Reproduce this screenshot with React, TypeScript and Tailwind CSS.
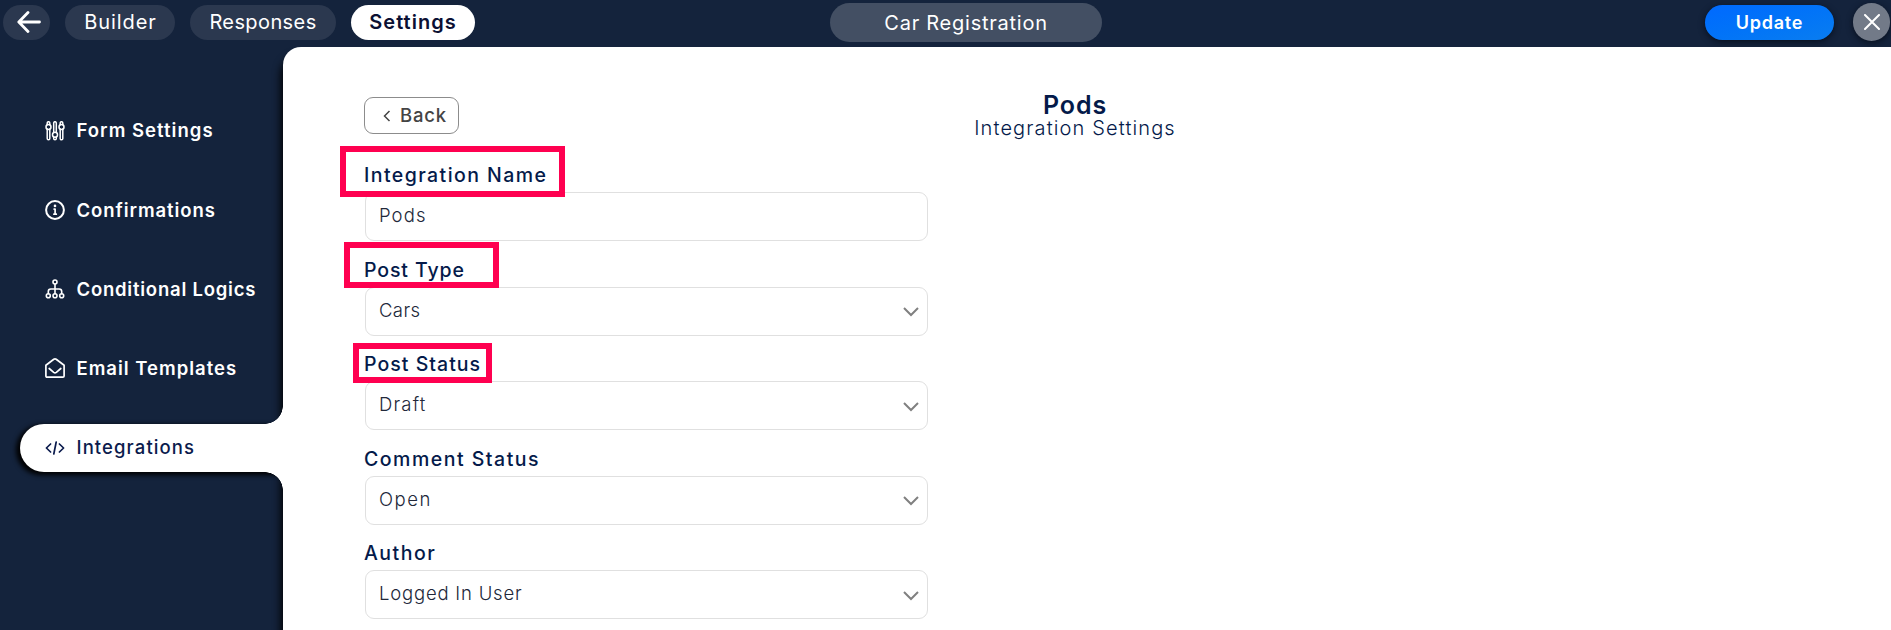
import React from "react";

const svgProps = {
  viewBox: "0 0 20 20",
  fill: "none",
  stroke: "currentColor",
  strokeLinecap: "round" as const,
  strokeLinejoin: "round" as const,
  className: "h-5 w-5 shrink-0",
};

function SlidersIcon() {
  return (
    <svg {...svgProps} strokeWidth={1.5}>
      <path d="M2.2 3.8V2a1.3 1.3 0 0 1 2.6 0v1.8M2.2 8v9.5a1.3 1.3 0 0 0 2.6 0V8M8.7 11.5V2a1.3 1.3 0 0 1 2.6 0v9.5M8.7 16v1.5a1.3 1.3 0 0 0 2.6 0V16M15.2 3.8V2a1.3 1.3 0 0 1 2.6 0v1.8M15.2 8v9.5a1.3 1.3 0 0 0 2.6 0V8" />
      <circle cx="3.5" cy="6" r="2.5" />
      <circle cx="10" cy="13.8" r="2.5" />
      <circle cx="16.5" cy="6" r="2.5" />
    </svg>
  );
}

function InfoIcon() {
  return (
    <svg {...svgProps} strokeWidth={2}>
      <circle cx="10" cy="10" r="8.9" />
      <path d="M9.1 9.1h1v5M8.9 14.2h2.4" strokeWidth={1.7} />
      <circle cx="10" cy="5.9" r="1.3" fill="currentColor" stroke="none" />
    </svg>
  );
}

function TreeIcon() {
  return (
    <svg {...svgProps} strokeWidth={1.6}>
      <circle cx="10" cy="3" r="2" />
      <circle cx="3.3" cy="16.8" r="2" />
      <circle cx="10" cy="16.8" r="2" />
      <circle cx="16.7" cy="16.8" r="2" />
      <path d="M10 5v9.8M3.3 14.8v-2.3q0-2.5 2.5-2.5h8.4q2.5 0 2.5 2.5v2.3" />
    </svg>
  );
}

function MailIcon() {
  return (
    <svg {...svgProps} strokeWidth={1.7}>
      <path d="M.9 7.3 8.8 1.3q1.2-.8 2.4 0l7.9 6v10.6q0 1.2-1.2 1.2H2.1q-1.2 0-1.2-1.2Z" />
      <path d="m4.2 10.5 4.5 3.8q1.3 1 2.6 0l4.5-3.8" />
    </svg>
  );
}

function CodeIcon() {
  return (
    <svg {...svgProps} strokeWidth={1.7}>
      <path d="M5.6 6 1.4 10l4.2 4M14.4 6l4.2 4-4.2 4M11.2 4 8.8 16" />
    </svg>
  );
}

const nav = [
  { label: "Form Settings", icon: <SlidersIcon />, tracking: "tracking-[1.03px]" },
  { label: "Confirmations", icon: <InfoIcon />, tracking: "tracking-[0.93px]" },
  { label: "Conditional Logics", icon: <TreeIcon />, tracking: "tracking-[0.77px]" },
  { label: "Email Templates", icon: <MailIcon />, tracking: "tracking-[1px]" },
];

const fields = [
  { label: "Integration Name", lt: "tracking-[1.43px]", value: "Pods", vt: "tracking-[1.1px]", mark: "-left-[24px] -top-[19px] h-[51px] w-[225px]" },
  { label: "Post Type", lt: "tracking-[0.9px]", value: "Cars", vt: "tracking-[0.4px]", select: true, mark: "-left-[20px] -top-[18px] h-[46px] w-[155px]" },
  { label: "Post Status", lt: "tracking-[1.03px]", value: "Draft", vt: "tracking-[1.2px]", select: true, mark: "-left-[11px] -top-[11px] h-[40px] w-[139px]" },
  { label: "Comment Status", lt: "tracking-[1.5px]", value: "Open", vt: "tracking-[1.5px]", select: true },
  { label: "Author", lt: "tracking-[1.5px]", value: "Logged In User", vt: "tracking-[0.8px]", select: true },
];

function Header() {
  return (
    <header className="flex h-[47px] shrink-0 items-start bg-[#14233c] pl-[3px] pr-px text-[20px] leading-none text-white">
      <button className="mt-[5px] flex h-[35px] w-[47px] items-center justify-center rounded-full bg-[#2b384f]">
        <svg viewBox="0 0 24 24" fill="none" stroke="currentColor" strokeWidth={2.8} strokeLinecap="round" strokeLinejoin="round" className="-mt-px ml-[5px] h-6 w-6">
          <path d="M22.5 12H2M11 2.5 1.8 12l9.2 9.5" />
        </svg>
      </button>
      <button className="ml-[15px] mt-[5px] h-[35px] w-[110px] rounded-full bg-[#2b384f] pb-px pl-px tracking-[0.9px]">Builder</button>
      <button className="ml-[15px] mt-[5px] h-[35px] w-[146px] rounded-full bg-[#2b384f] pb-px tracking-[0.4px]">Responses</button>
      <button className="ml-[15px] mt-[5px] h-[35px] w-[124px] rounded-full bg-white pb-px font-semibold tracking-[1px] text-[#0b1033]">Settings</button>
      <div className="ml-[355px] mt-[3px] flex h-[39px] w-[272px] items-center justify-center rounded-full bg-[#434f63] tracking-[0.75px]">Car Registration</div>
      <button className="ml-auto mt-[5px] h-[35px] w-[129px] rounded-full bg-linear-to-br from-[#0069ff] to-[#0a7df0] text-[18px] font-semibold tracking-[0.75px] shadow-[0_2px_6px_#08101f]">Update</button>
      <button className="ml-[19px] mt-[3px] flex h-[38px] w-[37px] items-center justify-center rounded-full bg-[#727a88] shadow-[0_2px_6px_#08101f]">
        <svg viewBox="0 0 16 16" stroke="currentColor" strokeWidth={2} strokeLinecap="round" className="h-4 w-4">
          <path d="m1 1 14 14m0-14-14 14" />
        </svg>
      </button>
    </header>
  );
}

function Sidebar() {
  return (
    <nav className="w-[283px] shrink-0 pt-[44px] text-[18.5px] text-white">
      {nav.map((item) => (
        <div key={item.label} className="flex h-[79.25px] items-center gap-3 pl-[44.5px]">
          {item.icon}
          <span className={`whitespace-nowrap font-semibold leading-none ${item.tracking}`}>{item.label}</span>
        </div>
      ))}
      <div className="relative z-20 ml-5 mt-[16px] flex h-12 items-center gap-3 rounded-l-full bg-white pl-[24.5px] text-[#0b1b4d] shadow-[-3px_2px_5px_1px_#000] [clip-path:inset(-20px_0_-20px_-20px)]">
        <CodeIcon />
        <span className="pb-px font-medium leading-none tracking-[1.1px]">Integrations</span>
        <i className="absolute -top-[18px] right-0 h-[18px] w-[18px] bg-[radial-gradient(circle_at_0_0,transparent_17.5px,#fff_18px)]" />
        <i className="absolute -bottom-[18px] right-0 h-[18px] w-[18px] bg-[radial-gradient(circle_at_0_100%,transparent_17.5px,#fff_18px)]" />
      </div>
    </nav>
  );
}

export default function App() {
  return (
    <div className="flex h-[630px] w-full flex-col overflow-hidden bg-[#14233c] font-['Inter',sans-serif]">
      <Header />
      <div className="flex min-h-0 flex-1 overflow-hidden">
        <Sidebar />
        <main className="relative z-10 flex-1 rounded-tl-[18px] bg-white pl-[81px] pr-[105px] pt-[47px] shadow-[-1px_10px_9px_1px_#000]">
          <div className="grid h-[71px] grid-cols-[1fr_auto_1fr] items-start">
            <button className="mt-[3px] flex h-[37px] w-[95px] items-center rounded-[9px] border border-[#8c8c8c] pl-[18px] text-[18.5px] font-medium leading-none tracking-[0.8px] text-[#444]">
              <svg viewBox="0 0 8 12" fill="none" stroke="currentColor" strokeWidth={1.5} className="mr-[9px] h-3 w-[8px]">
                <path d="M6.5 1 1.5 6l5 5" />
              </svg>
              Back
            </button>
            <div className="text-center text-[#041a4a]">
              <h1 className="text-[25px] font-semibold leading-[23px] tracking-[0.9px]">Pods</h1>
              <p className="text-[20px] font-light leading-[22px] tracking-[1.13px]">Integration Settings</p>
            </div>
          </div>
          <form className="flex w-[564px] flex-col">
            {fields.map((f) => (
              <div key={f.label} className="h-[94.5px]">
                <label className={`relative flex h-[27px] items-start whitespace-nowrap text-[19.5px] font-medium leading-5 text-[#041a4a] ${f.lt}`}>
                  {f.label}
                  {f.mark && <span className={`absolute z-10 border-[6px] border-[#ff0050] ${f.mark}`} />}
                </label>
                <div className="ml-px flex h-[49px] items-center justify-between rounded-[9px] border border-[#e0e0e0] pl-[13px] pr-[8px] text-[18.5px] font-light leading-none text-[#22283a]">
                  <span className={`pb-[2px] ${f.vt}`}>{f.value}</span>
                  {f.select && (
                    <svg viewBox="0 0 16 10" fill="none" stroke="#808080" strokeWidth={2} className="mt-[2px] h-[10px] w-4">
                      <path d="m1 1 7 7 7-7" />
                    </svg>
                  )}
                </div>
              </div>
            ))}
          </form>
        </main>
      </div>
    </div>
  );
}
